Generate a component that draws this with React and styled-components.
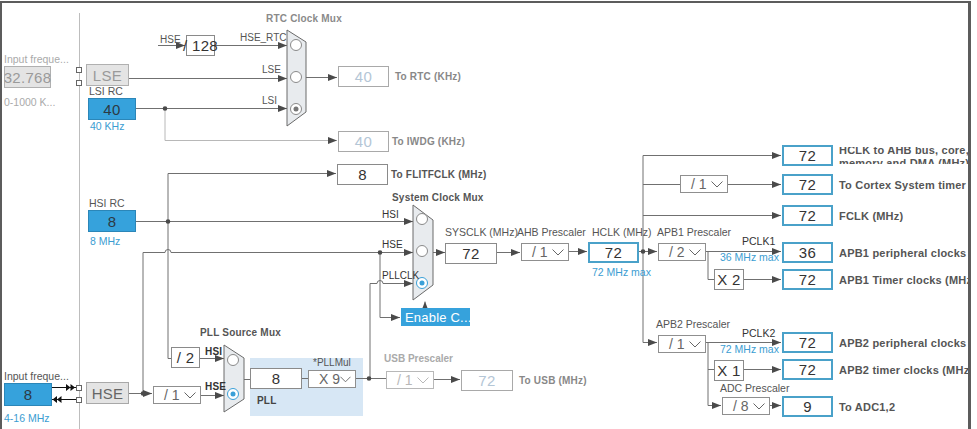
import React from 'react';
import styled, { createGlobalStyle, css } from 'styled-components';

const Global = createGlobalStyle`
  html, body { margin: 0; padding: 0; background: #fff; }
  body { font-family: "Liberation Sans", Arial, sans-serif; }
`;

const Canvas = styled.div`
  position: relative;
  width: 977px;
  height: 429px;
  overflow: hidden;
  background: #fff;
`;

const Clip = styled.div`
  position: absolute;
  left: 0;
  top: 0;
  width: 968px;
  height: 429px;
  overflow: hidden;
`;

const Frame = styled.div`
  position: absolute;
  left: 0;
  top: 1px;
  width: 966px;
  height: 440px;
  border: 2px solid #5c5c5c;
  border-right-width: 3px;
  pointer-events: none;
`;

const Wires = styled.svg`
  position: absolute;
  left: 0;
  top: 0;
`;

// nodes of the diagram sit at their canvas coordinates
const at = css`
  position: absolute;
  left: ${(p) => p.$x}px;
  top: ${(p) => p.$y}px;
`;

const kinds = {
  plain: css`background: #fff; border: 1px solid #8a8a8a; color: #333;`,
  out: css`background: #fff; border: 2px solid #4aa1c9; color: #333;`,
  off: css`background: #fff; border: 1px solid #a9a9a9; color: #b4c6d6;`,
  gray: css`background: #e4e4e4; border: 1px solid #b0b0b0; color: #9a9a9a;`,
  grayDark: css`background: #e4e4e4; border: 1px solid #a8a8a8; color: #666;`,
  blue: css`background: #36a2dc; border: 1px solid #2b86b8; color: #2d3a44;`,
};

const Box = styled.div`
  box-sizing: border-box;
  flex: none;
  width: ${(p) => p.$w || 51}px;
  height: ${(p) => p.$h || 21}px;
  display: flex;
  align-items: center;
  justify-content: center;
  white-space: nowrap;
  font-size: 15px;
  letter-spacing: 0.3px;
  ${(p) => kinds[p.$kind || 'plain']};
`;

const Node = styled.div`
  ${at};
`;

const Select = styled.div`
  box-sizing: border-box;
  width: 48px;
  height: 18px;
  border: 1px solid ${(p) => (p.$off ? '#b8b8b8' : '#8f8f8f')};
  background: #fff;
  color: ${(p) => (p.$off ? '#b8b8b8' : '#666')};
  display: flex;
  align-items: center;
  justify-content: space-between;
  padding: 0 4px 0 10px;
  font-size: 14px;
  white-space: nowrap;
`;

const Text = styled.div`
  ${at};
  white-space: nowrap;
  font-size: ${(p) => p.$size || 10.5}px;
  font-weight: ${(p) => (p.$bold ? 700 : 400)};
  color: ${(p) => p.$color || '#555'};
  line-height: 1;
  letter-spacing: ${(p) => (p.$bold ? '0.2px' : '0')};
`;

const Caption = styled.div`
  white-space: nowrap;
  font-size: 10.5px;
  line-height: 11px;
  color: ${(p) => p.$color || '#555'};
`;

const Column = styled.div`
  ${at};
  display: flex;
  flex-direction: column;
  align-items: flex-start;
  gap: ${(p) => p.$gap || 1}px;
`;

const OutRow = styled.div`
  ${at};
  display: flex;
  align-items: center;
  gap: ${(p) => p.$gap ?? 6}px;
`;

const OutLabel = styled.div`
  white-space: nowrap;
  font-size: ${(p) => p.$size || 11}px;
  font-weight: 700;
  color: ${(p) => p.$color || '#555'};
  letter-spacing: 0.2px;
  ${(p) =>
    p.$two &&
    css`
      height: 17px;
      overflow: hidden;
      line-height: 13px;
      & > div:first-child { margin-top: -3px; }
    `}
`;

const PllPanel = styled.div`
  ${at};
  width: 113px;
  height: 58px;
  background: #d7e7f5;
`;

const EnableBtn = styled.div`
  ${at};
  width: 69px;
  height: 18px;
  background: #36a2dc;
  color: #fff;
  font-size: 13px;
  display: flex;
  align-items: center;
  padding-left: 4px;
  box-sizing: border-box;
  white-space: nowrap;
  letter-spacing: 0.2px;
`;

const Pin = styled.div`
  ${at};
  width: 4px;
  height: 4px;
  border: 1px solid #666;
  background: #fff;
`;

const Chevron = () => (
  <svg width="12" height="7" viewBox="0 0 12 7">
    <polyline points="0.5,0.5 6,6 11.5,0.5" fill="none" stroke="currentColor" strokeWidth="1" />
  </svg>
);

const Drop = ({ v, off }) => (
  <Select $off={off}>
    <span>{v}</span>
    <Chevron />
  </Select>
);

const Out = ({ y, v, children, two }) => (
  <OutRow $x={782} $y={y}>
    <Box $kind="out">{v}</Box>
    <OutLabel $two={two}>{children}</OutLabel>
  </OutRow>
);

const W = '#707070';

const lines = [
  // RTC
  [158, 45, 185, 45, 1],
  [214, 45, 287, 45, 1],
  [128, 78, 287, 78, 1],
  [135, 108, 287, 108, 1],
  [306, 77, 337, 77, 1],
  // HSI
  [168, 173, 336, 173, 1],
  [168, 173, 168, 358, 0],
  [168, 358, 171, 358, 0],
  [135, 221, 413, 221, 1],
  [143, 252, 143, 393, 0],
  [380, 252, 380, 317, 0],
  [380, 317, 400, 317, 1],
  [370, 378, 370, 283, 0],
  [425, 316, 425, 301, 1],
  [433, 252, 445, 252, 1],
  [496, 252, 520, 252, 1],
  [568, 251, 587, 251, 1],
  [638, 251, 657, 251, 1],
  [643, 155, 643, 342, 0],
  [643, 155, 781, 155, 1],
  [643, 184, 680, 184, 0],
  [727, 184, 781, 184, 1],
  [643, 215, 781, 215, 1],
  [705, 251, 781, 251, 1],
  [708, 251, 708, 279, 0],
  [708, 279, 714, 279, 0],
  [743, 279, 781, 279, 1],
  [643, 342, 657, 342, 1],
  [705, 342, 781, 342, 1],
  [708, 342, 708, 405, 0],
  [708, 405, 721, 405, 1],
  [708, 369, 714, 369, 0],
  [743, 369, 781, 369, 1],
  [769, 405, 781, 405, 1],
  // HSE / PLL
  [128, 393, 152, 393, 1],
  [200, 395, 224, 395, 1],
  [199, 358, 224, 358, 1],
  [244, 379, 250, 379, 0],
  [301, 378, 308, 378, 0],
  [355, 378, 386, 378, 0],
  [433, 379, 460, 379, 1],
];

const dots = [
  [165, 108], [168, 221], [380, 252], [643, 251], [143, 393], [369, 378],
];

const Mux = ({ d, circles }) => (
  <g>
    <path d={d} fill="#e8ebee" stroke="#6a6a6a" strokeWidth="1" />
    {circles.map(([cx, cy, on], i) => (
      <g key={i}>
        <circle cx={cx} cy={cy} r="5.5" fill="#fff" stroke={on === 2 ? '#3aa0d8' : '#8a8a8a'} />
        {on ? <circle cx={cx} cy={cy} r="2.5" fill={on === 2 ? '#3aa0d8' : '#777'} /> : null}
      </g>
    ))}
  </g>
);

const Diagram = () => (
  <Wires width="977" height="429">
    <defs>
      <marker id="ar" markerWidth="9" markerHeight="8" refX="9" refY="4" orient="auto" markerUnits="userSpaceOnUse">
        <path d="M0,0.5 L9,4 L0,7.5 Z" fill="#4a4a4a" />
      </marker>
    </defs>
    <line x1="79.5" y1="13" x2="79.5" y2="429" stroke="#bdbdbd" />
    {lines.map(([x1, y1, x2, y2, a], i) => (
      <line
        key={i}
        x1={x1} y1={y1 + 0.5} x2={x2} y2={y2 + 0.5}
        stroke={W}
        strokeWidth="1"
        markerEnd={a ? 'url(#ar)' : undefined}
      />
    ))}
    <path d="M165,108.5 V140.5 H337" stroke="#b8b8b8" fill="none" markerEnd="url(#ar)" />
    <path d="M143,252.5 H165 A3,3 0 0 1 171,252.5 H413" stroke={W} fill="none" markerEnd="url(#ar)" />
    <path d="M370,283.5 H377 A3,3 0 0 1 383,283.5 H413" stroke={W} fill="none" markerEnd="url(#ar)" />
    {dots.map(([x, y], i) => (
      <circle key={i} cx={x} cy={y + 0.5} r="2.3" fill="#4a4a4a" />
    ))}
    {/* oscillator in/out pins */}
    <line x1="52" y1="387.5" x2="76" y2="387.5" stroke="#111" />
    <path d="M66,384 L70.5,387.5 L66,391 Z M70.5,384 L75,387.5 L70.5,391 Z" fill="#111" />
    <line x1="52" y1="399.5" x2="76" y2="399.5" stroke="#111" />
    <path d="M57,396 L52.5,399.5 L57,403 Z M61.5,396 L57,399.5 L61.5,403 Z" fill="#111" />
    <Mux d="M287,30 L306,42 L306,112 L287,126 Z" circles={[[296, 45, 0], [296, 77, 0], [296, 109, 1]]} />
    <Mux d="M413,205 L433,220 L433,285 L413,300 Z" circles={[[422, 219, 0], [422, 251, 0], [422, 283, 2]]} />
    <Mux d="M224,345 L244,358 L244,399 L224,412 Z" circles={[[233, 360, 0], [233, 394, 2]]} />
  </Wires>
);

export default function App() {
  return (
    <Canvas>
      <Global />
      <Clip>
        <PllPanel $x={250} $y={358} />
        <Diagram />

        {/* left inputs */}
        <Column $x={4} $y={54} $gap={1}>
          <Caption $color="#aaa">Input freque...</Caption>
          <Box $w={47} $h={22} $kind="gray">32.768</Box>
          <Caption $color="#aaa" style={{ marginTop: 8 }}>0-1000 K...</Caption>
        </Column>
        <Pin $x={76} $y={67} />
        <Pin $x={76} $y={80} />
        <Node $x={86} $y={64}>
          <Box $w={43} $h={22} $kind="gray">LSE</Box>
        </Node>
        <Column $x={88} $y={86}>
          <Caption style={{ marginLeft: 1 }}>LSI RC</Caption>
          <Box $w={48} $h={22} $kind="blue">40</Box>
          <Caption $color="#3b9dd2" style={{ marginLeft: 2 }}>40 KHz</Caption>
        </Column>

        <Column $x={88} $y={198}>
          <Caption style={{ marginLeft: 1 }}>HSI RC</Caption>
          <Box $w={48} $h={22} $kind="blue">8</Box>
          <Caption $color="#3b9dd2" style={{ marginLeft: 2, marginTop: 3 }}>8 MHz</Caption>
        </Column>

        <Column $x={4} $y={371}>
          <Caption>Input freque...</Caption>
          <Box $w={48} $h={23} $kind="blue">8</Box>
          <Caption $color="#3b9dd2" style={{ marginTop: 6 }}>4-16 MHz</Caption>
        </Column>
        <Pin $x={76} $y={385} />
        <Pin $x={76} $y={397} />
        <Node $x={86} $y={382}>
          <Box $w={43} $h={22} $kind="grayDark">HSE</Box>
        </Node>

        {/* RTC */}
        <Text $x={266} $y={14} $bold $color="#8a8a8a" $size={10}>RTC Clock Mux</Text>
        <Text $x={160} $y={35} $size={10}>HSE</Text>
        <Node $x={186} $y={35}><Box $w={29}>/ 128</Box></Node>
        <Text $x={240} $y={33} $size={10}>HSE_RTC</Text>
        <Text $x={262} $y={65} $size={10}>LSE</Text>
        <Text $x={262} $y={96} $size={10}>LSI</Text>
        <OutRow $x={338} $y={66}>
          <Box $kind="off">40</Box>
          <OutLabel $color="#888" $size={10}>To RTC (KHz)</OutLabel>
        </OutRow>
        <OutRow $x={338} $y={131} $gap={3}>
          <Box $kind="off">40</Box>
          <OutLabel $color="#888" $size={10}>To IWDG (KHz)</OutLabel>
        </OutRow>

        {/* system clock */}
        <OutRow $x={337} $y={164} $gap={3}>
          <Box>8</Box>
          <OutLabel $size={10}>To FLITFCLK (MHz)</OutLabel>
        </OutRow>
        <Text $x={392} $y={193} $bold $size={10}>System Clock Mux</Text>
        <Text $x={382} $y={210} $size={10} $color="#333">HSI</Text>
        <Text $x={382} $y={240} $size={10} $color="#333">HSE</Text>
        <Text $x={382} $y={271} $size={10} $color="#333">PLLCLK</Text>
        <EnableBtn $x={401} $y={308}>Enable C...</EnableBtn>
        <Column $x={445} $y={227} $gap={5}>
          <Caption>SYSCLK (MHz)</Caption>
          <Box $w={52}>72</Box>
        </Column>
        <Column $x={517} $y={227} $gap={5}>
          <Caption>AHB Prescaler</Caption>
          <div style={{ marginLeft: 4 }}><Drop v="/ 1" /></div>
        </Column>
        <Column $x={588} $y={227} $gap={4}>
          <Caption style={{ marginLeft: 4 }}>HCLK (MHz)</Caption>
          <Box $kind="out">72</Box>
          <Caption $color="#3b9dd2" style={{ marginLeft: 4 }}>72 MHz max</Caption>
        </Column>
        <Column $x={657} $y={227} $gap={5}>
          <Caption>APB1 Prescaler</Caption>
          <div style={{ marginLeft: 1 }}><Drop v="/ 2" /></div>
        </Column>
        <Text $x={742} $y={236} $color="#333">PCLK1</Text>
        <Text $x={720} $y={252} $color="#3b9dd2">36 MHz max</Text>
        <Node $x={714} $y={269}><Box $w={30}>X 2</Box></Node>
        <Node $x={680} $y={175}><Drop v="/ 1" /></Node>

        {/* outputs */}
        <Out y={145} v="72" two>
          <div>HCLK to AHB bus, core,</div>
          <div>memory and DMA (MHz)</div>
        </Out>
        <Out y={174} v="72">To Cortex System timer (MHz)</Out>
        <Out y={205} v="72">FCLK (MHz)</Out>
        <Out y={242} v="36">APB1 peripheral clocks (MHz)</Out>
        <Out y={269} v="72">APB1 Timer clocks (MHz)</Out>

        <Column $x={656} $y={319} $gap={5}>
          <Caption>APB2 Prescaler</Caption>
          <div style={{ marginLeft: 2 }}><Drop v="/ 1" /></div>
        </Column>
        <Text $x={742} $y={328} $color="#333">PCLK2</Text>
        <Text $x={720} $y={344} $color="#3b9dd2">72 MHz max</Text>
        <Out y={332} v="72">APB2 peripheral clocks (MHz)</Out>
        <Node $x={714} $y={360}><Box $w={30}>X 1</Box></Node>
        <Out y={359} v="72">APB2 timer clocks (MHz)</Out>
        <Column $x={720} $y={383} $gap={3}>
          <Caption>ADC Prescaler</Caption>
          <div style={{ marginLeft: 2 }}><Drop v="/ 8" /></div>
        </Column>
        <Out y={396} v="9">To ADC1,2</Out>

        {/* PLL */}
        <Text $x={200} $y={328} $bold $size={10}>PLL Source Mux</Text>
        <Node $x={171} $y={347}><Box $w={29}>/ 2</Box></Node>
        <Text $x={205} $y={347} $bold $size={10} $color="#333">HSI</Text>
        <Node $x={153} $y={386}><Drop v="/ 1" /></Node>
        <Text $x={205} $y={382} $bold $size={10} $color="#333">HSE</Text>
        <Text $x={313} $y={358} $size={10}>*PLLMul</Text>
        <Node $x={250} $y={368}><Box $w={52}>8</Box></Node>
        <Node $x={308} $y={370}><Drop v="X 9" /></Node>
        <Text $x={257} $y={396} $bold $size={10} $color="#444">PLL</Text>
        <Column $x={384} $y={353} $gap={7}>
          <Caption $color="#aaa" style={{ fontWeight: 700, fontSize: 10 }}>USB Prescaler</Caption>
          <div style={{ marginLeft: 2 }}><Drop v="/ 1" off /></div>
        </Column>
        <OutRow $x={461} $y={370}>
          <Box $w={52} $kind="off">72</Box>
          <OutLabel $color="#888" $size={10}>To USB (MHz)</OutLabel>
        </OutRow>
      </Clip>
      <Frame />
    </Canvas>
  );
}
